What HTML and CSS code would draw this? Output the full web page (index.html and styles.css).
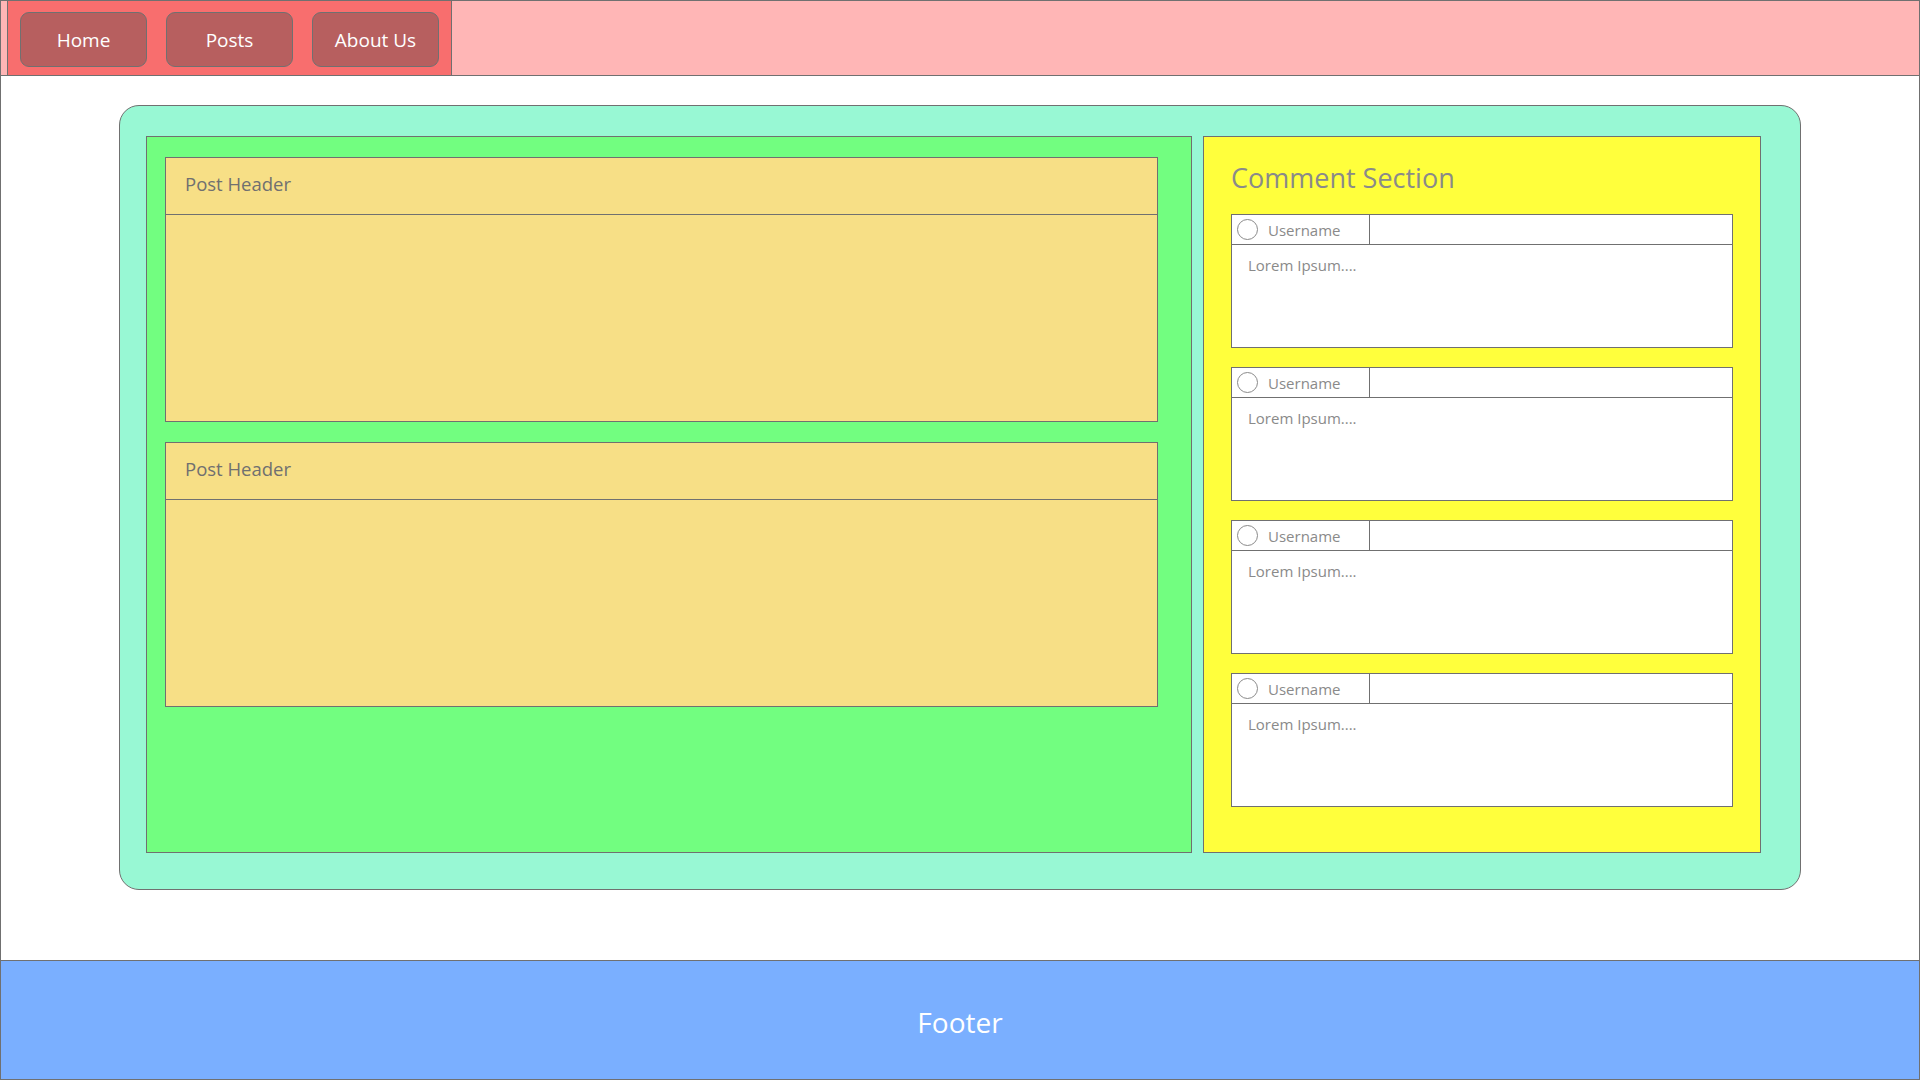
FILE: index.html
```html
<!DOCTYPE html>
<html lang="en">
<head>
<meta charset="utf-8">
<title>Blog Layout</title>
<link rel="stylesheet" href="styles.css">
</head>
<body>
<div class="page">
  <header class="site-header">
    <nav class="nav">
      <a class="nav-btn" href="#">Home</a>
      <a class="nav-btn" href="#">Posts</a>
      <a class="nav-btn" href="#">About Us</a>
    </nav>
  </header>
  <main class="main">
    <div class="container">
      <section class="posts">
        <article class="post">
          <div class="post-header">Post Header</div>
          <div class="post-body"></div>
        </article>
        <article class="post">
          <div class="post-header">Post Header</div>
          <div class="post-body"></div>
        </article>
      </section>
      <aside class="comments">
        <h2 class="comments-title">Comment Section</h2>
        <div class="comment">
          <div class="comment-head">
            <div class="user"><span class="avatar"></span><span class="username">Username</span></div>
          </div>
          <div class="comment-body">Lorem Ipsum....</div>
        </div>
        <div class="comment">
          <div class="comment-head">
            <div class="user"><span class="avatar"></span><span class="username">Username</span></div>
          </div>
          <div class="comment-body">Lorem Ipsum....</div>
        </div>
        <div class="comment">
          <div class="comment-head">
            <div class="user"><span class="avatar"></span><span class="username">Username</span></div>
          </div>
          <div class="comment-body">Lorem Ipsum....</div>
        </div>
        <div class="comment">
          <div class="comment-head">
            <div class="user"><span class="avatar"></span><span class="username">Username</span></div>
          </div>
          <div class="comment-body">Lorem Ipsum....</div>
        </div>
      </aside>
    </div>
  </main>
  <footer class="site-footer">Footer</footer>
</div>
</body>
</html>
```
FILE: styles.css
```css
* { box-sizing: border-box; }
html, body { margin: 0; padding: 0; }
body {
  font-family: "Open Sans", "Noto Sans", "Liberation Sans", sans-serif;
  background: #ffffff;
}
.page {
  width: 1920px;
  height: 1080px;
  border: 1px solid #707070;
  display: flex;
  flex-direction: column;
  overflow: hidden;
}
.site-header {
  height: 75px;
  flex: none;
  background: #ffb6b6;
  border-bottom: 1px solid #707070;
  display: flex;
}
.nav {
  margin-left: 6px;
  background: #f86e6e;
  border-left: 1px solid #707070;
  border-right: 1px solid #707070;
  display: flex;
  gap: 19px;
  padding: 11px 12px 0 12px;
}
.nav-btn {
  width: 127px;
  height: 55px;
  background: #b75f5f;
  border: 1px solid #707070;
  border-radius: 9px;
  color: #ffffff;
  text-decoration: none;
  font-size: 19px;
  display: flex;
  align-items: center;
  justify-content: center;
}
.main {
  flex: 1;
  padding: 29px 118px 0 118px;
}
.container {
  height: 785px;
  background: #98f8d4;
  border: 1px solid #707070;
  border-radius: 20px;
  padding: 30px 39px 36px 26px;
  display: flex;
  gap: 11px;
}
.posts {
  width: 1046px;
  background: #72fe80;
  border: 1px solid #707070;
  padding: 20px 33px 0 18px;
  display: flex;
  flex-direction: column;
  gap: 20px;
}
.post {
  height: 265px;
  background: #f7df86;
  border: 1px solid #707070;
  display: flex;
  flex-direction: column;
}
.post-header {
  height: 57px;
  border-bottom: 1px solid #707070;
  padding: 0 0 5px 19px;
  display: flex;
  align-items: center;
  color: #707070;
  font-size: 18.5px;
}
.post-body { flex: 1; }
.comments {
  width: 558px;
  background: #ffff3c;
  border: 1px solid #707070;
  padding: 0 27px 0 27px;
}
.comments-title {
  margin: 0;
  height: 77px;
  padding-top: 22px;
  font-weight: 400;
  font-size: 27px;
  line-height: 38px;
  color: #8a8a8a;
}
.comment {
  height: 134px;
  background: #ffffff;
  border: 1px solid #707070;
  margin-bottom: 19px;
  display: flex;
  flex-direction: column;
}
.comment-head {
  height: 30px;
  border-bottom: 1px solid #707070;
  display: flex;
}
.user {
  width: 138px;
  border-right: 1px solid #707070;
  display: flex;
  align-items: center;
  padding-left: 5px;
}
.avatar {
  width: 21px;
  height: 21px;
  border: 1px solid #8a8a8a;
  border-radius: 50%;
  margin-right: 10px;
}
.username {
  font-size: 15px;
  color: #8a8a8a;
}
.comment-body {
  flex: 1;
  padding: 10px 16px;
  font-size: 15px;
  line-height: 20px;
  color: #8a8a8a;
}
.site-footer {
  height: 119px;
  flex: none;
  background: #7aafff;
  border-top: 1px solid #707070;
  display: flex;
  align-items: center;
  justify-content: center;
  color: #ffffff;
  font-size: 28px;
  padding-top: 3px;
}
```
